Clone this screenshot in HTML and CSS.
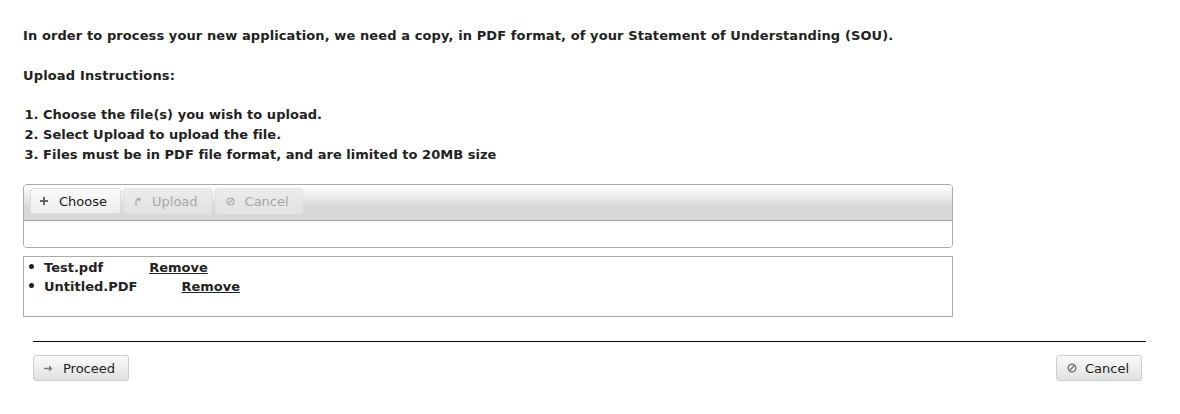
FILE: index.html
```html
<!DOCTYPE html>
<html>
<head>
<meta charset="utf-8">
<link rel="stylesheet" href="styles.css">
</head>
<body>
<div class="page">
  <p class="intro">In order to process your new application, we need a copy, in PDF format, of your Statement of Understanding (SOU).</p>
  <p class="heading">Upload Instructions:</p>
  <ol class="steps">
    <li>Choose the file(s) you wish to upload.</li>
    <li>Select Upload to upload the file.</li>
    <li>Files must be in PDF file format, and are limited to 20MB size</li>
  </ol>

  <div class="uploader">
    <div class="toolbar">
      <button class="tbtn">
        <svg class="ico" width="8" height="8" viewBox="0 0 8 8"><path d="M3 0h2v3h3v2H5v3H3V5H0V3h3z" fill="#666"/></svg>
        Choose
      </button>
      <button class="tbtn disabled">
        <svg class="ico" width="8" height="10" viewBox="0 0 8 10"><path d="M2 9.5V5.5Q2 3.5 4.5 3.5" fill="none" stroke="#aaa" stroke-width="1.3"/><path d="M4 0.8L7.5 3.5L4 6.2z" fill="#aaa" transform="rotate(-45 5 3.5)"/></svg>
        Upload
      </button>
      <button class="tbtn disabled">
        <svg class="ico" width="9" height="9" viewBox="0 0 10 10"><circle cx="5" cy="5" r="3.8" fill="none" stroke="#b0b0b0" stroke-width="1.4"/><path d="M2.5 7.5L7.5 2.5" stroke="#b0b0b0" stroke-width="1.4"/></svg>
        Cancel
      </button>
    </div>
    <div class="upload-content"></div>
  </div>

  <div class="filelist">
    <ul>
      <li><span class="fname">Test.pdf</span><a class="remove remove-1" href="#">Remove</a></li>
      <li><span class="fname">Untitled.PDF</span><a class="remove remove-2" href="#">Remove</a></li>
    </ul>
  </div>

  <hr class="divider">

  <div class="actions">
    <button class="btn">
      <svg class="ico" width="9" height="7" viewBox="0 0 9 7"><path d="M0 3.5H6" stroke="#777" stroke-width="1.4"/><path d="M5 0.5L8.5 3.5L5 6.5z" fill="#777"/></svg>
      Proceed
    </button>
    <button class="btn">
      <svg class="ico" width="10" height="10" viewBox="0 0 10 10"><circle cx="5" cy="5" r="3.8" fill="none" stroke="#777" stroke-width="1.4"/><path d="M2.5 7.5L7.5 2.5" stroke="#777" stroke-width="1.4"/></svg>
      Cancel
    </button>
  </div>
</div>
</body>
</html>
```

FILE: styles.css
```css
html, body {
  margin: 0;
  padding: 0;
  background: #fff;
}
body {
  font-family: "DejaVu Sans", Verdana, sans-serif;
  font-size: 13px;
  color: #222;
}
.page {
  padding: 20px 23px 0 23px;
}
.intro, .heading {
  font-weight: bold;
  margin: 0;
  line-height: 20px;
  height: 20px;
}
.intro {
  margin-top: 6px;
  letter-spacing: 0.1px;
}
.heading {
  margin-top: 20px;
  letter-spacing: 0.15px;
}
.steps {
  font-weight: bold;
  margin: 19px 0 0 0;
  padding: 0 0 0 20px;
  line-height: 20px;
  letter-spacing: 0.03px;
}
.uploader {
  margin-top: 19px;
  width: 928px;
  border: 1px solid #aaa;
  border-radius: 4px;
  overflow: hidden;
}
.toolbar {
  height: 36px;
  border-bottom: 1px solid #aaa;
  background: linear-gradient(#fff 0%, #e8e8e8 40%, #d8d8d8 62%, #d8d8d8 100%);
  display: flex;
  align-items: flex-start;
  padding: 3px 0 0 6px;
  box-sizing: border-box;
  gap: 2px;
}
.tbtn {
  font-family: inherit;
  font-size: 13px;
  height: 26px;
  padding: 0 13px 0 9px;
  border: 1px solid #dcdcdc;
  border-radius: 3px;
  background: linear-gradient(#fafafa, #eeeeee);
  color: #1a1a1a;
  display: flex;
  align-items: center;
  gap: 11px;
}
.tbtn.disabled {
  color: #a6a6a6;
  border-color: #e2e2e2;
  background: linear-gradient(#ececec, #e2e2e2);
  padding: 0 13px 0 10px;
  gap: 10px;
}
.tbtn.disabled + .tbtn.disabled {
  margin-left: 1px;
}
.upload-content {
  height: 26px;
  background: #fff;
}
.filelist {
  margin-top: 8px;
  width: 928px;
  height: 59px;
  border: 1px solid #aaa;
}
.filelist ul {
  margin: 1px 0 0 0;
  padding: 0 0 0 5px;
  list-style: none;
  font-weight: bold;
  line-height: 19px;
}
.filelist li::before {
  content: "";
  display: inline-block;
  width: 5px;
  height: 5px;
  border-radius: 50%;
  background: #222;
  margin-right: 10px;
  vertical-align: 3px;
}
.fname {
  display: inline-block;
}
.remove {
  color: #222;
  text-decoration: underline;
  font-weight: bold;
}
.remove-1 { margin-left: 46px; }
.remove-2 { margin-left: 44px; }
.divider {
  margin: 24px 0 0 10px;
  width: 1113px;
  border: 0;
  border-top: 1px solid #000;
  height: 0;
}
.actions {
  display: flex;
  justify-content: space-between;
  margin: 13px 15px 0 10px;
}
.btn {
  font-family: inherit;
  font-size: 13px;
  height: 26px;
  padding: 0 13px 0 10px;
  border: 1px solid #ccc;
  border-radius: 3px;
  background: linear-gradient(#fafafa, #e0e0e0);
  color: #222;
  display: flex;
  align-items: center;
  gap: 10px;
}
.btn + .btn {
  padding-left: 10px;
  padding-right: 12px;
  gap: 8px;
}
.ico {
  display: block;
}
```
